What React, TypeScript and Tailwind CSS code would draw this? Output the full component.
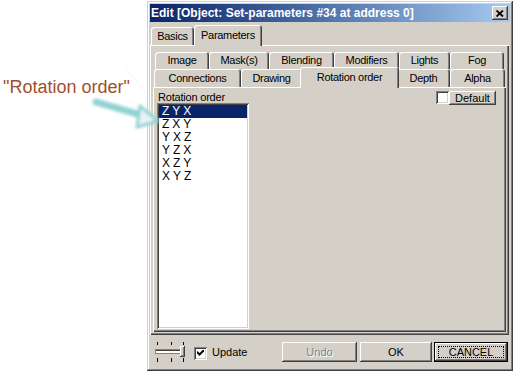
import React from "react";

const raisedWin =
  "shadow-[inset_-1px_-1px_#404040,inset_1px_1px_#d4d0c8,inset_-2px_-2px_#808080,inset_2px_2px_#ffffff]";
const raisedBtn =
  "shadow-[inset_-1px_-1px_#404040,inset_1px_1px_#ffffff,inset_-2px_-2px_#808080,inset_2px_2px_#d4d0c8]";
const sunken =
  "shadow-[inset_1px_1px_#808080,inset_-1px_-1px_#ffffff,inset_2px_2px_#404040,inset_-2px_-2px_#d4d0c8]";
const pageFrame =
  "shadow-[inset_1px_1px_#ffffff,inset_-1px_-1px_#404040,inset_-2px_-2px_#808080]";
const tabEdge =
  "shadow-[inset_1px_1px_#ffffff,inset_-1px_0_#404040,inset_-2px_0_#808080]";

type TabItem = { label: string; w: string; selected?: boolean };

const topTabs: TabItem[] = [
  { label: "Basics", w: "w-[43px] h-[18px]" },
  { label: "Parameters", w: "w-[68px] h-[21px] -mb-[1px] z-10", selected: true },
];

const rowOne: TabItem[] = [
  { label: "Image", w: "w-[54px]" },
  { label: "Mask(s)", w: "w-[60px]" },
  { label: "Blending", w: "w-[65px]" },
  { label: "Modifiers", w: "w-[65px]" },
  { label: "Lights", w: "w-[51px]" },
  { label: "Fog", w: "w-[54px]" },
];

const rowTwo: TabItem[] = [
  { label: "Connections", w: "w-[87px] h-[18px]" },
  { label: "Drawing", w: "w-[61px] h-[18px]" },
  { label: "Rotation order", w: "w-[99px] h-[21px] -mx-[2px] -mb-[1px] z-10", selected: true },
  { label: "Depth", w: "w-[53px] h-[18px]" },
  { label: "Alpha", w: "w-[55px] h-[18px]" },
];

const orders = ["ZYX", "ZXY", "YXZ", "YZX", "XZY", "XYZ"];

function Tab({ item, className = "" }: { item: TabItem; className?: string }) {
  return (
    <div
      className={`relative flex shrink-0 items-center justify-center rounded-t-[3px] bg-[#d4d0c8] text-[11px] tracking-[-0.3px] text-black ${tabEdge} ${item.w} ${className}`}
    >
      {item.label}
    </div>
  );
}

function CheckBox({ checked }: { checked?: boolean }) {
  return (
    <div className={`flex h-[13px] w-[13px] shrink-0 items-center justify-center bg-white ${sunken}`}>
      {checked && (
        <svg width="7" height="7" viewBox="0 0 7 7">
          <path d="M0.5 2.5 L2.5 4.5 L6.5 0.5" fill="none" stroke="#000" strokeWidth="2" strokeLinecap="square" />
        </svg>
      )}
    </div>
  );
}

function SliderGlyph() {
  return (
    <svg width="30" height="20" viewBox="0 0 30 20">
      <g fill="#000">
        <rect x="2" y="0" width="1" height="3" />
        <rect x="16" y="0" width="1" height="3" />
        <rect x="28" y="0" width="1" height="3" />
        <rect x="2" y="16" width="1" height="4" />
        <rect x="16" y="16" width="1" height="4" />
        <rect x="28" y="16" width="1" height="4" />
      </g>
      <rect x="0" y="7" width="27" height="5" fill="#808080" />
      <rect x="1" y="8" width="26" height="3" fill="#404040" />
      <rect x="1" y="9" width="26" height="2" fill="#ffffff" />
      <rect x="25" y="4" width="5" height="11" fill="#404040" />
      <rect x="25" y="4" width="4" height="10" fill="#ffffff" />
      <rect x="26" y="5" width="3" height="9" fill="#808080" />
      <rect x="26" y="5" width="2" height="8" fill="#d4d0c8" />
    </svg>
  );
}

function Annotation() {
  return (
    <>
      <div className="absolute left-[3px] top-[78px] text-[18px] leading-[18px] text-[#a0502a]">
        "Rotation order"
      </div>
      <svg className="pointer-events-none absolute left-0 top-0 z-20" width="170" height="140" viewBox="0 0 170 140">
        <defs>
          <filter id="glow" x="-20%" y="-20%" width="140%" height="140%">
            <feGaussianBlur stdDeviation="1.8" />
          </filter>
        </defs>
        <line x1="125" y1="67" x2="149" y2="96" stroke="#e4e4e4" strokeWidth="1" strokeDasharray="1 2" />
        <g filter="url(#glow)">
          <line x1="96" y1="102" x2="141" y2="115" stroke="#8fd2d2" strokeWidth="7" strokeLinecap="round" />
          <polygon points="140,106 158,121 137,127" fill="#e6f4f4" stroke="#8fd2d2" strokeWidth="3" strokeLinejoin="round" />
        </g>
      </svg>
    </>
  );
}

export default function App() {
  return (
    <div className="relative h-[373px] w-[517px] overflow-hidden bg-white pt-[1px] [font-family:'Liberation_Sans',Arial,sans-serif]">
      <Annotation />

      <div className={`ml-[147px] flex h-[370px] w-[366px] flex-col bg-[#d4d0c8] p-[3px] ${raisedWin}`}>
        {/* title bar */}
        <div className="flex h-[18px] shrink-0 items-center justify-between bg-gradient-to-r from-[#0a246a] to-[#a6caf0] pl-[1px] pr-[2px]">
          <span className="text-[12px] font-bold leading-none text-white">
            Edit [Object: Set-parameters #34 at address 0]
          </span>
          <div className={`flex h-[14px] w-[16px] items-center justify-center bg-[#d4d0c8] ${raisedBtn}`}>
            <svg width="8" height="7" viewBox="0 0 8 7">
              <path d="M0.5 0.5 L7 6.5 M7 0.5 L0.5 6.5" stroke="#000" strokeWidth="1.8" />
            </svg>
          </div>
        </div>

        {/* top tabs */}
        <div className="flex h-[23px] shrink-0 items-end pl-[1px]">
          {topTabs.map((t) => (
            <Tab key={t.label} item={t} />
          ))}
        </div>

        {/* Parameters page */}
        <div className={`mr-[1px] flex h-[290px] shrink-0 flex-col px-[3px] pb-[3px] pt-[7px] ${pageFrame}`}>
          <div className="flex h-[17px] shrink-0 items-stretch pl-[2px]">
            {rowOne.map((t) => (
              <Tab key={t.label} item={t} />
            ))}
          </div>
          <div className="flex h-[18px] shrink-0 items-end pl-[1px]">
            {rowTwo.map((t) => (
              <Tab key={t.label} item={t} />
            ))}
          </div>

          {/* Rotation order page */}
          <div className={`flex flex-1 flex-col pl-[4px] pr-[10px] pt-[4px] ${pageFrame}`}>
            <div className="flex h-[12px] items-start justify-between">
              <span className="pl-[1px] text-[11px] leading-[12px] tracking-[-0.2px] text-black">Rotation order</span>
              <div className="flex items-start">
                <CheckBox />
                <div className={`flex h-[14px] w-[47px] items-center justify-center bg-[#d4d0c8] text-[11px] text-black ${raisedBtn}`}>
                  Default
                </div>
              </div>
            </div>
            <div className={`h-[226px] w-[92px] bg-white p-[2px] ${sunken}`}>
              {orders.map((o, i) => (
                <div
                  key={o}
                  className={`h-[13px] overflow-hidden pl-[3px] text-[12px] leading-[13px] tracking-[3px] ${
                    i === 0 ? "bg-[#0a246a] text-white" : "text-black"
                  }`}
                >
                  {o}
                </div>
              ))}
            </div>
          </div>
        </div>

        {/* bottom bar */}
        <div className="flex flex-1 items-start pl-[5px] pr-[2px] pt-[7px] text-[11px] text-black">
          <SliderGlyph />
          <div className="ml-[9px] mt-[5px]">
            <CheckBox checked />
          </div>
          <span className="ml-[5px] mt-[4px] leading-[13px]">Update</span>
          <div className="flex-1" />
          <div className={`flex h-[20px] w-[75px] items-center justify-center bg-[#d4d0c8] text-[#808080] [text-shadow:1px_1px_0_#ffffff] ${raisedBtn}`}>
            Undo
          </div>
          <div className={`ml-[3px] flex h-[20px] w-[72px] items-center justify-center bg-[#d4d0c8] ${raisedBtn}`}>
            OK
          </div>
          <div className="ml-[2px] h-[20px] w-[74px] border border-black">
            <div className={`flex h-full w-full items-center justify-center bg-[#d4d0c8] p-[3px] ${raisedBtn}`}>
              <div className="flex h-full w-full items-center justify-center border border-dotted border-black">
                CANCEL
              </div>
            </div>
          </div>
        </div>
      </div>
    </div>
  );
}
